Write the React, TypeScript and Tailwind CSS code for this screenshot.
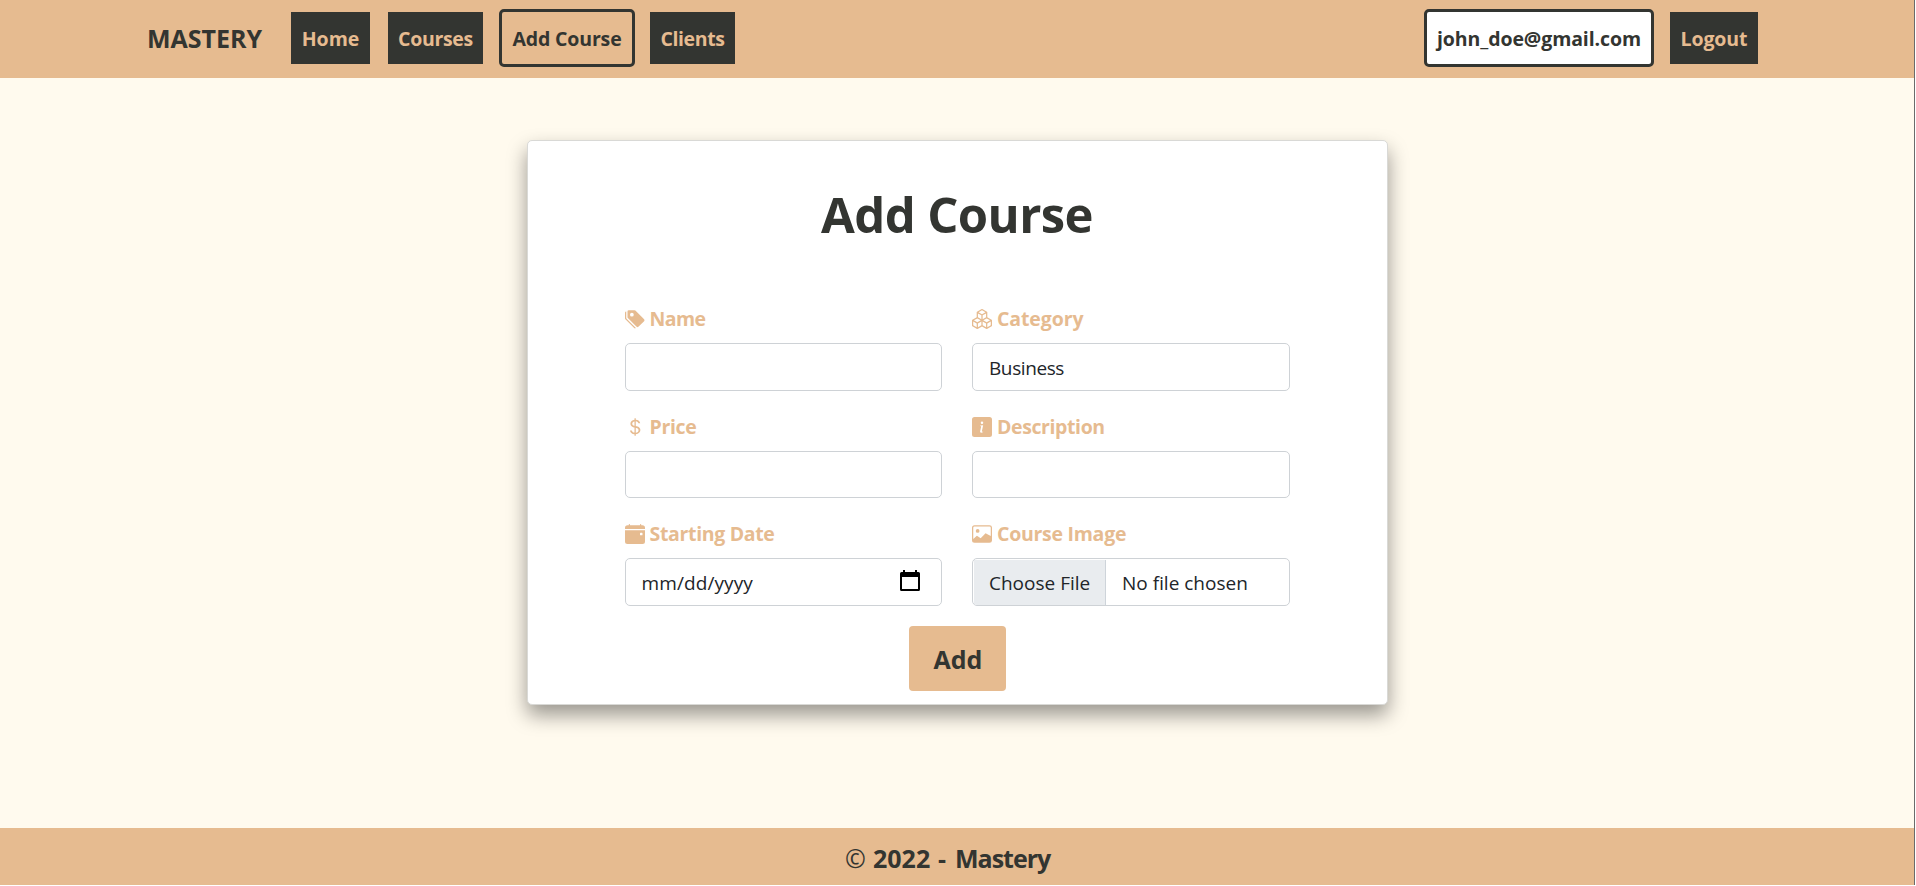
import type { ReactNode } from 'react';
import {
  BsBoxes,
  BsCalendarEventFill,
  BsCurrencyDollar,
  BsImage,
  BsInfoSquareFill,
  BsTagsFill,
} from 'react-icons/bs';

function NavButton({ children, className }: { children: ReactNode; className: string }) {
  return (
    <a
      href="#"
      className={`flex h-[52px] shrink-0 items-center justify-center bg-[#333531] pt-[2px] text-[19.5px] font-bold whitespace-nowrap text-[#e6bb90] ${className}`}
    >
      {children}
    </a>
  );
}

function OutlinedButton({ children, className }: { children: ReactNode; className: string }) {
  return (
    <a
      href="#"
      className={`flex h-[58px] shrink-0 items-center justify-center rounded-[5px] border-[3px] border-[#333531] pt-[2px] text-[19.5px] font-bold whitespace-nowrap text-[#333531] ${className}`}
    >
      {children}
    </a>
  );
}

function Field({ icon, label, tracking, children }: { icon: ReactNode; label: string; tracking: string; children?: ReactNode }) {
  return (
    <div className="flex h-[107.5px] flex-col">
      <div className="flex h-[30px] items-center gap-[5px] text-[19.5px] leading-[30px] font-bold text-[#e6bb90]">
        {icon}
        <span className={tracking}>{label}</span>
      </div>
      <div className="mt-[9px] flex h-[47.5px] items-center overflow-hidden rounded-[5px] border border-[#ced2d6] bg-white text-[19px] whitespace-nowrap text-[#212529]">
        {children}
      </div>
    </div>
  );
}

export default function App() {
  return (
    <div className="h-[886px] w-[1916px] overflow-hidden bg-white font-['Open_Sans','Noto_Sans',sans-serif]">
      <div className="flex h-[885px] w-[1915px] flex-col border-r border-[#6b6b6b] bg-[#fffaee]">
        <header className="flex h-[78px] items-start bg-[#e6bb90] pl-[147px]">
          <div className="w-[144px] pt-[19px] text-[25px] leading-[38px] font-bold text-[#333531]">
            MASTERY
          </div>
          <nav className="flex grow items-center pt-[9px]">
            <NavButton className="w-[79px]"><span>Home</span></NavButton>
            <NavButton className="ml-[18px] w-[95px] tracking-[-0.33px]"><span>Courses</span></NavButton>
            <OutlinedButton className="ml-[16px] w-[136px] tracking-[-0.15px]"><span>Add Course</span></OutlinedButton>
            <NavButton className="ml-[15px] w-[85px] tracking-[-0.37px]"><span>Clients</span></NavButton>
          </nav>
          <div className="mr-[156px] flex items-center pt-[9px]">
            <OutlinedButton className="w-[230px] bg-white tracking-[-0.1px]"><span>john_doe@gmail.com</span></OutlinedButton>
            <NavButton className="ml-[16px] w-[88px] tracking-[-0.1px]"><span>Logout</span></NavButton>
          </div>
        </header>

        <main className="flex grow justify-center pt-[62px]">
          <section className="h-[565px] w-[861px] rounded-[5px] border border-[#d9d9d6] bg-white px-[97px] shadow-[0_10px_20px_rgba(0,0,0,0.4)]">
            <h1 className="pt-[35px] text-center text-[49px] leading-[76px] font-bold tracking-[-0.6px] text-[#333531]">
              Add Course
            </h1>
            <form className="mt-[52px]">
              <div className="grid grid-cols-2 gap-x-[30px]">
                <Field icon={<BsTagsFill size={20} />} label="Name" tracking="tracking-[-0.6px]" />
                <Field icon={<BsBoxes size={20} />} label="Category" tracking="tracking-[-0.1px]">
                  <span className="pt-[2px] pl-[16px] tracking-[-0.4px]">Business</span>
                </Field>
                <Field icon={<BsCurrencyDollar size={20} />} label="Price" tracking="tracking-[-0.35px]" />
                <Field icon={<BsInfoSquareFill size={20} />} label="Description" tracking="tracking-[-0.4px]" />
                <Field icon={<BsCalendarEventFill size={20} />} label="Starting Date" tracking="tracking-[-0.33px]">
                  <span className="grow pt-[2px] pl-[16px] tracking-[0.1px]">mm/dd/yyyy</span>
                  <svg className="mr-[21px] mb-[2px] h-[21px] w-5" viewBox="0 0 20 21" fill="none">
                    <path d="M3 0h2v2h10V0h2v2h1.5Q20 2 20 3.500V19.500Q20 21 18.500 21H1.500Q0 21 0 19.500V3.500Q0 2 1.500 2H3ZM2 7V19H18V7Z" fill="#000" fillRule="evenodd" />
                  </svg>
                </Field>
                <Field icon={<BsImage size={20} />} label="Course Image" tracking="tracking-[-0.27px]">
                  <span className="ml-[1px] flex h-[45px] w-[132px] shrink-0 items-center self-end border-r border-[#ced4da] bg-[#e9ecef] pt-[2px] pl-[15px]">
                    Choose File
                  </span>
                  <span className="pt-[2px] pl-[16px]">No file chosen</span>
                </Field>
              </div>
              <div className="-mt-px flex justify-center">
                <button
                  type="button"
                  className="h-[65px] w-[97px] rounded-[4px] bg-[#e6bb90] pt-[3px] pl-[2px] text-[25px] font-bold text-[#333531]"
                >
                  Add
                </button>
              </div>
            </form>
          </section>
        </main>

        <footer className="flex h-[57px] items-center bg-[#e6bb90] pt-[4px] pl-[845px] text-[25px] font-bold text-[#333531]">
          <span className="w-[28px] shrink-0 font-normal">©</span>
          <span className="w-[65px] shrink-0">2022</span>
          <span className="w-[17px] shrink-0">-</span>
          <span className="tracking-[-1px]">Mastery</span>
        </footer>
      </div>
    </div>
  );
}
